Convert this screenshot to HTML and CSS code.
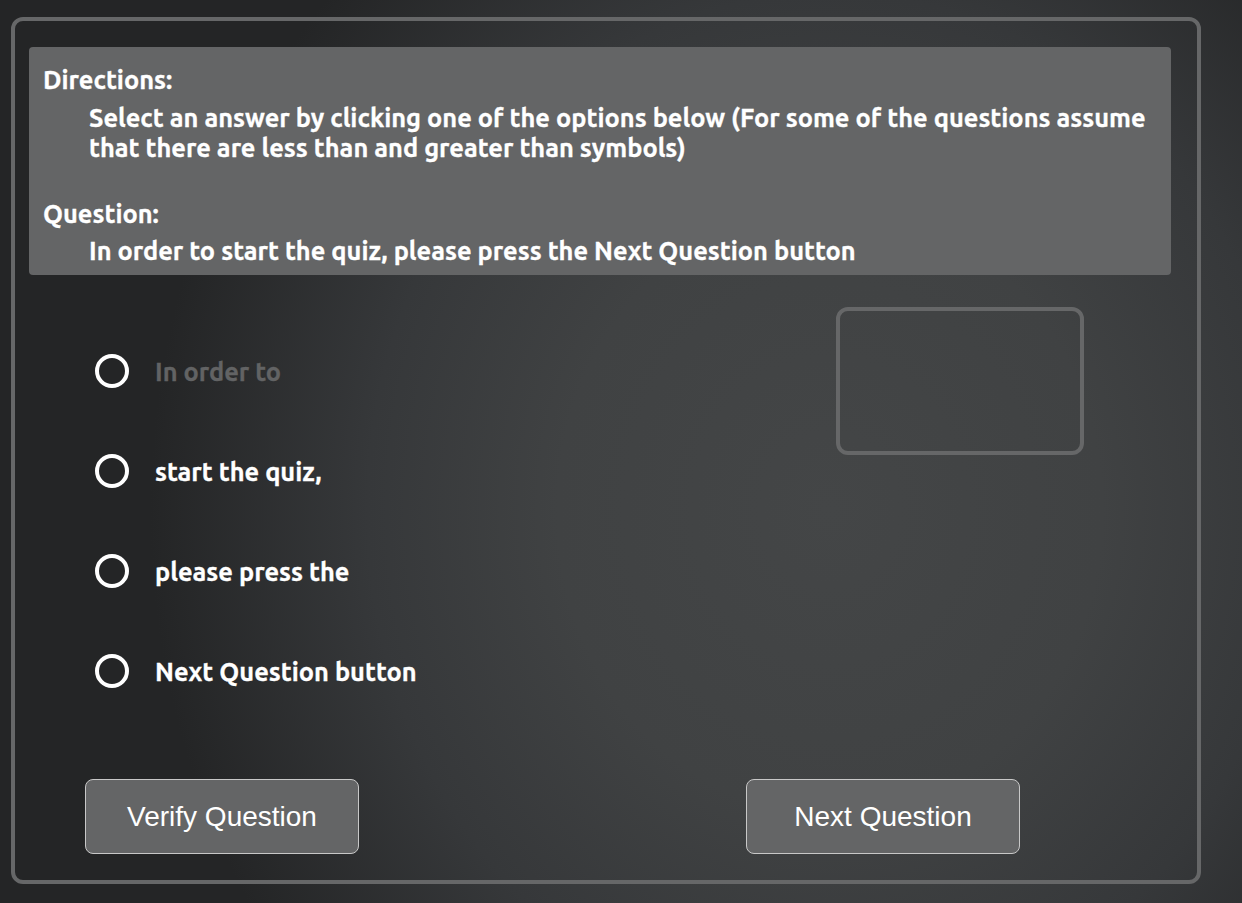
FILE: index.html
```html
<!DOCTYPE html>
<html>
<head>
<meta charset="utf-8">
<link rel="stylesheet" href="styles.css">
</head>
<body>
<div class="quiz">
  <div class="info">
    <div class="label">Directions:</div>
    <div class="text">Select an answer by clicking one of the options below (For some of the questions assume that there are less than and greater than symbols)</div>
    <div class="label label-q">Question:</div>
    <div class="text text-q">In order to start the quiz, please press the Next Question button</div>
  </div>
  <div class="middle">
    <ul class="options">
      <li class="option dim"><span class="radio"></span><span>In order to</span></li>
      <li class="option"><span class="radio"></span><span>start the quiz,</span></li>
      <li class="option"><span class="radio"></span><span>please press the</span></li>
      <li class="option"><span class="radio"></span><span>Next Question button</span></li>
    </ul>
    <div class="result"></div>
  </div>
  <div class="buttons">
    <button class="btn">Verify Question</button>
    <button class="btn btn-next">Next Question</button>
  </div>
</div>
</body>
</html>
```

FILE: styles.css
```css
html, body {
  margin: 0;
  padding: 0;
}
body {
  width: 1242px;
  height: 903px;
  overflow: hidden;
  background: radial-gradient(ellipse 680px 760px at 830px 510px, #444647 0%, #404243 40%, #36383a 68%, #242526 100%);
  background-color: #2a2b2c;
  font-family: "Ubuntu", "Open Sans", sans-serif;
  color: #ffffff;
  padding: 17px 0 0 11px;
  box-sizing: border-box;
}
.quiz {
  width: 1190px;
  height: 867px;
  box-sizing: border-box;
  border: 4px solid #666768;
  border-radius: 12px;
  padding: 26px 26px 0 14px;
  display: flex;
  flex-direction: column;
}
.info {
  background: #646566;
  border-radius: 4px;
  height: 228px;
  box-sizing: border-box;
  padding: 18px 14px 0 14px;
  font-weight: 700;
  font-size: 25.4px;
  line-height: 30px;
  -webkit-text-stroke: 0.3px #ffffff;
}
.text {
  padding-left: 46px;
  margin-top: 8px;
}
.label-q {
  margin-top: 36px;
}
.text-q {
  margin-top: 7px;
}
.middle {
  display: flex;
  justify-content: space-between;
  padding: 32px 0 0 66px;
  height: 470px;
  box-sizing: border-box;
}
.options {
  list-style: none;
  margin: 0;
  padding: 0;
  display: flex;
  flex-direction: column;
}
.option {
  height: 100px;
  display: flex;
  align-items: center;
  gap: 26px;
  font-weight: 700;
  font-size: 25.4px;
  -webkit-text-stroke: 0.3px currentColor;
}
.option:first-child {
  margin-top: 14px;
}
.option.dim {
  color: #626364;
}
.option .radio {
  width: 34px;
  height: 34px;
  box-sizing: border-box;
  border: 4px solid #ffffff;
  border-radius: 50%;
  flex: none;
}
.result {
  width: 248px;
  height: 148px;
  box-sizing: border-box;
  border: 4px solid #666768;
  border-radius: 12px;
  margin-right: 87px;
}
.buttons {
  display: flex;
  padding: 34px 0 0 56px;
  gap: 387px;
}
.btn {
  width: 274px;
  height: 75px;
  background: #646566;
  border: 1px solid #c8c8c8;
  border-radius: 8px;
  color: #ffffff;
  font-family: "Liberation Sans", Arial, sans-serif;
  font-size: 28px;
  padding: 0;
}
```
